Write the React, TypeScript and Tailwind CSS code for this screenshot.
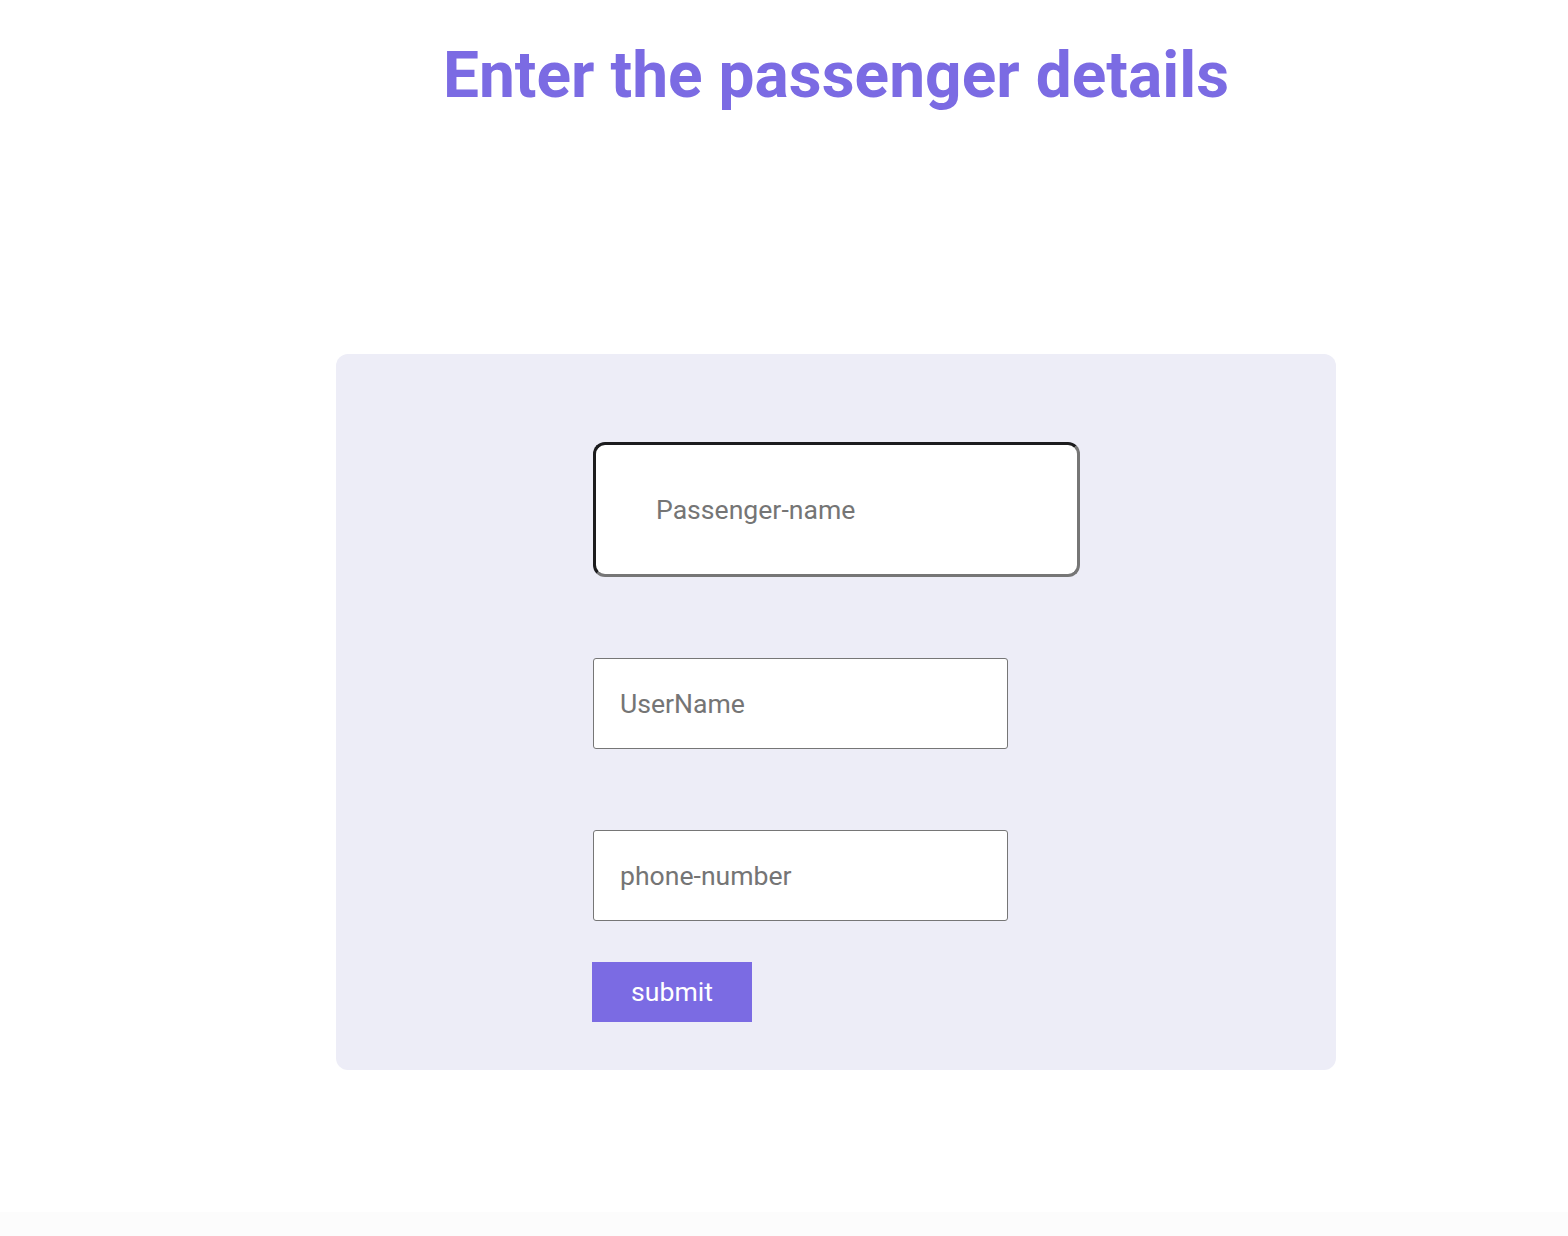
export default function App() {
  return (
    <div className="min-h-[1236px] bg-white flex flex-col font-['Roboto',sans-serif]">
      <div className="pl-[104px] flex flex-col items-center">
        <h1 className="mt-[38px] text-[64px] leading-[75px] font-bold text-[#7b6be3] tracking-[0.02px]">
          Enter the passenger details
        </h1>

        {/* form card */}
        <form
          className="mt-[241px] w-[1000px] h-[716px] bg-[#ededf7] rounded-[12px] pl-[257px] pt-[88px] flex flex-col items-start"
          onSubmit={(e) => e.preventDefault()}
        >
          <input
            type="text"
            placeholder="Passenger-name"
            className="w-[487px] h-[135px] bg-white rounded-[12px] border-[3px] border-t-[#1c1c1e] border-l-[#1c1c1e] border-r-[#767676] border-b-[#767676] pl-[60px] text-[26.6px] text-black placeholder:text-[#757575] outline-none"
          />
          <input
            type="text"
            placeholder="UserName"
            className="mt-[81px] w-[415px] h-[91px] bg-white rounded-[3px] border border-[#767676] pl-[26px] text-[26.6px] text-black placeholder:text-[#757575] outline-none"
          />
          <input
            type="text"
            placeholder="phone-number"
            className="mt-[81px] w-[415px] h-[91px] bg-white rounded-[3px] border border-[#767676] pl-[26px] text-[26.6px] text-black placeholder:text-[#757575] outline-none"
          />
          <button
            type="submit"
            className="mt-[41px] -ml-px w-[160px] h-[60px] bg-[#7b6be3] text-white text-[26.6px]"
          >
            submit
          </button>
        </form>
      </div>
      <div className="mt-auto h-[24px] bg-[#fcfcfc]" />
    </div>
  );
}
